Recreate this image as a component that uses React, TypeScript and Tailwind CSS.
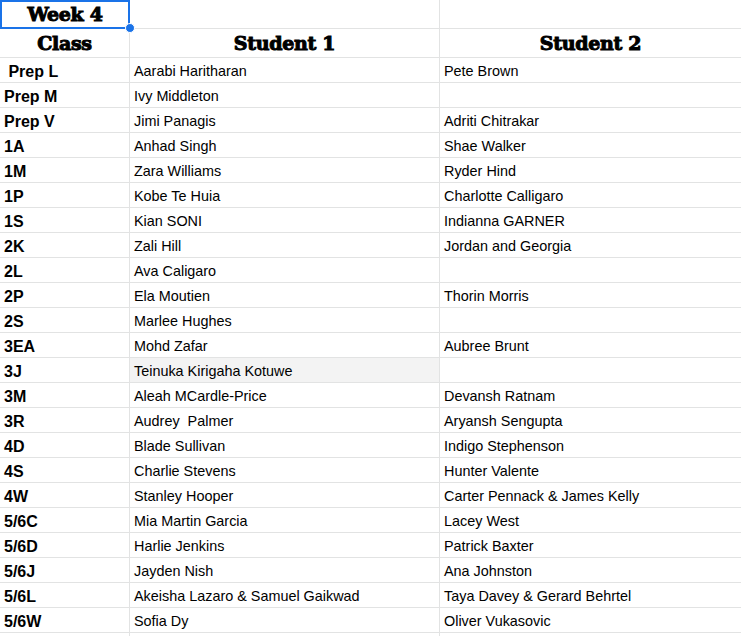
const ROWS: [string, string, string][] = [
  [" Prep L", "Aarabi Haritharan", "Pete Brown"],
  ["Prep M", "Ivy Middleton", ""],
  ["Prep V", "Jimi Panagis", "Adriti Chitrakar"],
  ["1A", "Anhad Singh", "Shae Walker"],
  ["1M", "Zara Williams", "Ryder Hind"],
  ["1P", "Kobe Te Huia", "Charlotte Calligaro"],
  ["1S", "Kian SONI", "Indianna GARNER"],
  ["2K", "Zali Hill", "Jordan and Georgia"],
  ["2L", "Ava Caligaro", ""],
  ["2P", "Ela Moutien", "Thorin Morris"],
  ["2S", "Marlee Hughes", ""],
  ["3EA", "Mohd Zafar", "Aubree Brunt"],
  ["3J", "Teinuka Kirigaha Kotuwe", ""],
  ["3M", "Aleah MCardle-Price", "Devansh Ratnam"],
  ["3R", "Audrey  Palmer", "Aryansh Sengupta"],
  ["4D", "Blade Sullivan", "Indigo Stephenson"],
  ["4S", "Charlie Stevens", "Hunter Valente"],
  ["4W", "Stanley Hooper", "Carter Pennack & James Kelly"],
  ["5/6C", "Mia Martin Garcia", "Lacey West"],
  ["5/6D", "Harlie Jenkins", "Patrick Baxter"],
  ["5/6J", "Jayden Nish", "Ana Johnston"],
  ["5/6L", "Akeisha Lazaro & Samuel Gaikwad", "Taya Davey & Gerard Behrtel"],
  ["5/6W", "Sofia Dy", "Oliver Vukasovic"],
];

const slab =
  "font-['DejaVu_Serif',serif] font-black text-[19px] text-black [-webkit-text-stroke:1px_black] tracking-[-0.3px]";

export default function App() {
  return (
    <div className="w-[741px] h-[636px] overflow-hidden bg-white font-['Liberation_Sans',Arial,sans-serif] text-black">
      {/* title row */}
      <div className="flex h-[29px] border-b border-[#e2e3e3]">
        <div className="relative w-[130px] shrink-0 flex items-center justify-center">
          <span className={slab}>Week 4</span>
          <div className="absolute inset-0 border-2 border-[#1a73e8] w-[130px] h-[29px]" />
          <div className="absolute right-[-5px] bottom-[-5px] w-[10px] h-[10px] rounded-full bg-[#1a73e8] border border-white z-10" />
        </div>
        <div className="w-[310px] shrink-0 border-r border-[#e2e3e3]" />
        <div className="flex-1" />
      </div>

      {/* header row */}
      <div className="flex h-[29px] border-b border-[#e2e3e3]">
        <div className="w-[130px] shrink-0 border-r border-[#e2e3e3] flex items-center justify-center">
          <span className={slab}>Class</span>
        </div>
        <div className="w-[310px] shrink-0 border-r border-[#e2e3e3] flex items-center justify-center">
          <span className={slab}>Student 1</span>
        </div>
        <div className="flex-1 flex items-center justify-center">
          <span className={slab}>Student 2</span>
        </div>
      </div>

      {ROWS.map(([cls, s1, s2]) => (
        <div key={cls} className="flex h-[25px] border-b border-[#e2e3e3]">
          <div className="w-[130px] shrink-0 border-r border-[#e2e3e3] flex items-end pl-[4px] pb-[1px]">
            <span className="whitespace-pre text-[16px] font-bold leading-[18px]">{cls}</span>
          </div>
          <div
            className={`w-[310px] shrink-0 border-r border-[#e2e3e3] flex items-end pl-[4px] pb-[3px] ${
              cls === "3J" ? "bg-[#f3f3f3]" : ""
            }`}
          >
            <span className="whitespace-pre text-[14.4px] leading-4">{s1}</span>
          </div>
          <div className="flex-1 flex items-end pl-[4px] pb-[3px]">
            <span className="whitespace-pre text-[14.4px] leading-4">{s2}</span>
          </div>
        </div>
      ))}

      <div className="flex h-[25px]">
        <div className="w-[130px] shrink-0 border-r border-[#e2e3e3]" />
        <div className="w-[310px] shrink-0 border-r border-[#e2e3e3]" />
        <div className="flex-1" />
      </div>
    </div>
  );
}
